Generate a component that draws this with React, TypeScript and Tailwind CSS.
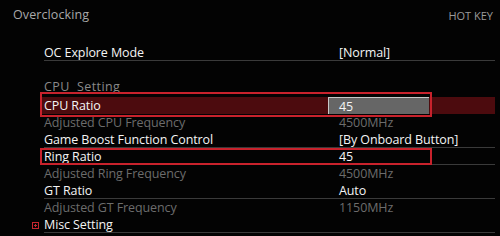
export default function App() {
  return (
    <div className="relative h-[236px] w-[500px] overflow-hidden bg-[#030303] font-['Open_Sans',sans-serif] text-[12.5px] leading-[17px] tracking-[-0.1px]">
      {/* header */}
      <div className="flex h-[44px] items-start justify-between pl-[13px] pr-[7px] pt-[6px]">
        <span className="text-[12.5px] tracking-[0.1px] text-[#a9a9a9]">Overclocking</span>
        <span className="pt-[1px] text-[11px] tracking-normal text-[#9a9a9a]">HOT KEY</span>
      </div>

      <div className="ml-[44px] w-[451px]">
        <Row label="OC Explore Mode" value="[Normal]" line />

        <div className="mt-[17px] flex h-[17px] items-center text-[#8a8a8a] tracking-[0.4px]">
          CPU&nbsp; Setting
        </div>

        {/* CPU Ratio, selected */}
        <div className="-ml-[2px] mt-[2px] flex h-[17px] items-center bg-[#4c0b0e] pl-[2px]">
          <span className="w-[284px] text-[#f4f4f4]">CPU Ratio</span>
          <span className="flex h-[17px] w-[101px] items-center border-l border-t border-l-[#c8c8c8] border-t-[#c8c8c8] bg-[#666666] pl-[10px] text-[#f4f4f4]">
            45
          </span>
        </div>

        <Row label="Adjusted CPU Frequency" value="4500MHz" dim />
        <Row label="Game Boost Function Control" value="[By Onboard Button]" line />
        <Row label="Ring Ratio" value="45" line />
        <Row label="Adjusted Ring Frequency" value="4500MHz" dim />
        <Row label="GT Ratio" value="Auto" line />
        <Row label="Adjusted GT Frequency" value="1150MHz" dim />

        <div className="relative flex h-[17px] items-center border-b border-[#3a3a3a] text-[#f4f4f4]">
          <span className="absolute -left-[12px] top-[6px] flex h-[7px] w-[7px] items-center justify-center border border-[#c3262e]">
            <span className="absolute h-[1px] w-[3px] bg-[#c3262e]" />
            <span className="absolute h-[3px] w-[1px] bg-[#c3262e]" />
          </span>
          Misc Setting
        </div>
      </div>

      {/* red annotation boxes */}
      <div className="absolute left-[40px] top-[92px] h-[25px] w-[392px] border-2 border-[#c8222c]" />
      <div className="absolute left-[40px] top-[148px] h-[17px] w-[392px] border-2 border-[#c8222c]" />
    </div>
  )
}

function Row({ label, value, dim = false, line = false }: { label: string; value: string; dim?: boolean; line?: boolean }) {
  return (
    <div
      className={
        "flex h-[17px] items-center " +
        (line ? "border-b border-[#3a3a3a] " : "") +
        (dim ? "text-[#6c6c6c]" : "text-[#f4f4f4]")
      }
    >
      <span className="w-[295px]">{label}</span>
      <span>{value}</span>
    </div>
  )
}
